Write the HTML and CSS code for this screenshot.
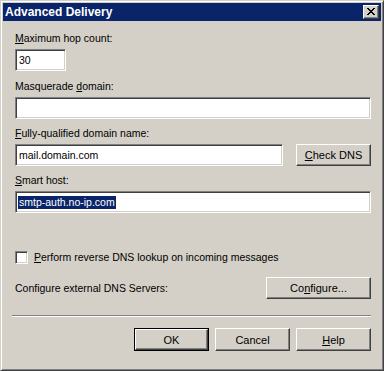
FILE: index.html
```html
<!DOCTYPE html>
<html lang="en">
<head>
  <meta charset="UTF-8" />
  <title>Advanced Delivery</title>
  <link rel="stylesheet" href="styles.css">
</head>
<body>
  <!-- Dialog window -->
  <div class="window">
    <div class="titlebar">
      <span class="title">Advanced Delivery</span>
      <span class="close-btn">
        <svg width="8" height="7" viewBox="0 0 8 7">
          <path d="M0 0h2v1h1v1h2v-1h1v-1h2v1h-1v1h-1v1h-1v1h1v1h1v1h1v1h-2v-1h-1v-1h-2v1h-1v1h-2v-1h1v-1h1v-1h1v-1h-1v-1h-1v-1h-1z" fill="#000"/>
        </svg>
      </span>
    </div>

    <div class="dialog-body">
      <div class="field field-first">
        <div class="field-label"><u>M</u>aximum hop count:</div>
        <div class="edit edit-short">30</div>
      </div>

      <div class="field">
        <div class="field-label">Masquerade <u>d</u>omain:</div>
        <div class="edit"></div>
      </div>

      <div class="field">
        <div class="field-label"><u>F</u>ully-qualified domain name:</div>
        <div class="field-row">
          <div class="edit edit-grow">mail.domain.com</div>
          <button class="btn"><u>C</u>heck DNS</button>
        </div>
      </div>

      <div class="field">
        <div class="field-label"><u>S</u>mart host:</div>
        <div class="edit"><span class="selected">smtp-auth.no-ip.com</span></div>
      </div>

      <div class="check-row">
        <span class="checkbox"></span>
        <span><u>P</u>erform reverse DNS lookup on incoming messages</span>
      </div>

      <div class="config-row">
        <span>Configure external DNS Servers:</span>
        <button class="btn btn-wide">Co<u>n</u>figure...</button>
      </div>

      <div class="separator"></div>

      <div class="footer">
        <button class="btn btn-default"><span>OK</span></button>
        <button class="btn">Cancel</button>
        <button class="btn"><u>H</u>elp</button>
      </div>
    </div>
  </div>
</body>
</html>
```

FILE: styles.css
```css
body {
  margin: 0;
  background: #d4d0c8;
  font-family: 'Liberation Sans', Arial, sans-serif;
  font-size: 10.5px;
  color: #000;
}

/* Window frame */
.window {
  width: 384px;
  height: 371px;
  box-sizing: border-box;
  background: #d4d0c8;
  border: 1px solid;
  border-color: #d4d0c8 #404040 #404040 #d4d0c8;
  box-shadow: inset 1px 1px #fff, inset -1px -1px #808080;
  padding: 2px;
}

.titlebar {
  height: 18px;
  background: #0a246a;
  display: flex;
  align-items: center;
  justify-content: space-between;
  padding: 0 2px 0 2px;
}

.title {
  color: #fff;
  font-weight: bold;
  font-size: 12px;
}

.close-btn {
  width: 16px;
  height: 14px;
  box-sizing: border-box;
  background: #d4d0c8;
  border: 1px solid;
  border-color: #fff #404040 #404040 #fff;
  box-shadow: inset -1px -1px #808080;
  display: flex;
  align-items: center;
  justify-content: center;
}

.close-btn svg {
  display: block;
  margin: 0 1px 1px 0;
}

/* Content */
.dialog-body {
  padding: 11px 10px 0 12px;
}

.field {
  margin-bottom: 8px;
}

.field-first {
  margin-bottom: 9px;
}

.field-label {
  line-height: 13px;
  margin-bottom: 4px;
}

.field-row {
  display: flex;
  gap: 13px;
}

/* Sunken edit box */
.edit {
  height: 22px;
  box-sizing: border-box;
  background: #fff;
  border: 1px solid;
  border-color: #808080 #fff #fff #808080;
  box-shadow: inset 1px 1px #404040, inset -1px -1px #d4d0c8;
  padding: 3px 3px 0 3px;
  line-height: 14px;
  white-space: nowrap;
}

.edit-short {
  width: 51px;
}

.edit-grow {
  flex: 1;
}

.selected {
  background: #0a246a;
  color: #fff;
  display: inline-block;
  line-height: 13px;
  margin-left: -1px;
  padding: 0 1px;
}

/* Raised button */
.btn {
  font: inherit;
  font-size: 11px;
  color: #000;
  width: 75px;
  height: 22px;
  box-sizing: border-box;
  background: #d4d0c8;
  border: 1px solid;
  border-color: #fff #404040 #404040 #fff;
  box-shadow: inset -1px -1px #808080;
  padding: 0;
  flex-shrink: 0;
}

.btn-wide {
  width: 105px;
}

.btn-default {
  height: 23px;
  border: 1px solid #000;
  box-shadow: none;
  padding: 0;
}

.btn-default span {
  display: flex;
  align-items: center;
  justify-content: center;
  height: 100%;
  box-sizing: border-box;
  border: 1px solid;
  border-color: #fff #404040 #404040 #fff;
  box-shadow: inset -1px -1px #808080;
}

.check-row {
  display: flex;
  align-items: center;
  gap: 6px;
  margin-top: 38px;
  line-height: 13px;
}

.checkbox {
  width: 13px;
  height: 13px;
  box-sizing: border-box;
  background: #fff;
  border: 1px solid;
  border-color: #808080 #fff #fff #808080;
  box-shadow: inset 1px 1px #404040, inset -1px -1px #d4d0c8;
}

.config-row {
  display: flex;
  justify-content: space-between;
  align-items: center;
  margin-top: 13px;
}

.separator {
  margin: 16px 0 0 -3px;
  border-top: 1px solid #808080;
  border-bottom: 1px solid #fff;
  height: 0;
}

.footer {
  display: flex;
  justify-content: flex-end;
  gap: 6px;
  margin-top: 11px;
}

.footer .btn {
  height: 23px;
}
```
